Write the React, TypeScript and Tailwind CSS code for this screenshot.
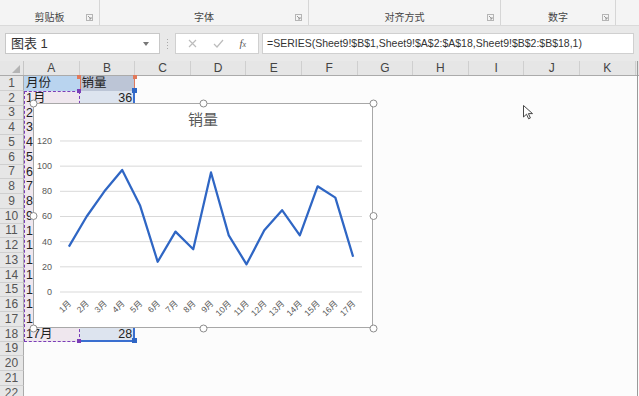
import React from "react";

const cols = ["A", "B", "C", "D", "E", "F", "G", "H", "I", "J", "K"];
const sales = [36, 60, 80, 97, 69, 24, 48, 34, 95, 45, 22, 49, 65, 45, 84, 75, 28];

const font = "font-['Liberation_Sans','Noto_Sans_CJK_SC',sans-serif]";

function Launcher() {
  return (
    <svg width="7" height="7" viewBox="0 0 7 7" className="absolute right-[6px] bottom-[4px]">
      <rect x="0.5" y="0.5" width="6" height="6" fill="none" stroke="#b5b5b5" />
      <path d="M2 2 L5 5 M5 3 V5 H3" stroke="#9a9a9a" fill="none" />
    </svg>
  );
}

function Ribbon() {
  const groups = [
    { label: "剪贴板", w: "w-[100px]" },
    { label: "字体", w: "w-[209px]" },
    { label: "对齐方式", w: "w-[192px]" },
    { label: "数字", w: "w-[115px]" },
  ];
  return (
    <div className="flex h-[26px] bg-[#f4f4f4] border-b border-[#dadada]">
      {groups.map((g) => (
        <div
          key={g.label}
          className={`${g.w} relative border-r border-[#d6d6d6] text-[10px] text-[#444]`}
        >
          <span className="absolute left-0 right-0 top-[12px] text-center leading-[12px]">{g.label}</span>
          <Launcher />
        </div>
      ))}
      <div className="flex-1" />
    </div>
  );
}

function FormulaBar() {
  return (
    <div className="flex items-center h-[35px] bg-[#e9e9e9] pl-[5px] pr-[5px]">
      <div className="w-[155px] h-[21px] bg-white border border-[#c8c8c8] flex items-center justify-between pl-[5px] pr-[10px]">
        <span className="text-[13px] text-[#333]">图表 1</span>
        <svg width="6" height="4" viewBox="0 0 6 4">
          <path d="M0 0 H6 L3 4 Z" fill="#777" />
        </svg>
      </div>
      <div className="w-[15px] flex flex-col items-center gap-[2px]">
        <span className="w-[1px] h-[1px] bg-[#aaa]" />
        <span className="w-[1px] h-[1px] bg-[#aaa]" />
        <span className="w-[1px] h-[1px] bg-[#aaa]" />
        <span className="w-[1px] h-[1px] bg-[#aaa]" />
      </div>
      <div className="w-[84px] h-[21px] bg-white border border-[#d0d0d0] flex items-center justify-around px-[4px]">
        <svg width="9" height="9" viewBox="0 0 9 9">
          <path d="M1 1 L8 8 M8 1 L1 8" stroke="#bcbcbc" strokeWidth="1.2" />
        </svg>
        <svg width="11" height="9" viewBox="0 0 11 9">
          <path d="M1 5 L4 8 L10 1" stroke="#bcbcbc" strokeWidth="1.2" fill="none" />
        </svg>
        <span className="text-[11px] italic font-['Liberation_Serif',serif] text-[#555]">
          f<span className="text-[8px]">x</span>
        </span>
      </div>
      <div className="flex-1 h-[21px] ml-[3px] bg-white border border-[#d0d0d0] flex items-center pl-[4px] text-[10.5px] text-[#333]">
        =SERIES(Sheet9!$B$1,Sheet9!$A$2:$A$18,Sheet9!$B$2:$B$18,1)
      </div>
    </div>
  );
}

function Chart() {
  const W = 340;
  const H = 225;
  const x0 = 27;
  const x1 = 329;
  const y0 = 189;
  const step = 25.17;
  const cw = (x1 - x0) / 17;
  const pts = sales.map((v, i) => [x0 + cw * (i + 0.5), y0 - (v / 20) * step]);
  const handles = [
    [0, 0], [W / 2, 0], [W, 0],
    [0, H / 2], [W, H / 2],
    [0, H], [W / 2, H], [W, H],
  ];
  return (
    <div className="absolute left-[33px] top-[103px] w-[340px] h-[225px] bg-white border border-[#a8a8a8]">
      <svg width={W} height={H} className="absolute left-[-1px] top-[-1px] overflow-visible">
        <text x={W / 2} y={22} textAnchor="middle" fontSize="15" fill="#595959" fontFamily="Noto Sans CJK SC, sans-serif">
          销量
        </text>
        {[0, 1, 2, 3, 4, 5, 6].map((k) => (
          <g key={k}>
            <line x1={x0} x2={x1} y1={y0 - k * step} y2={y0 - k * step} stroke="#d9d9d9" strokeWidth="1" />
            <text x={19} y={y0 - k * step + 3} textAnchor="end" fontSize="9" fill="#595959" fontFamily="Liberation Sans, sans-serif">
              {k * 20}
            </text>
          </g>
        ))}
        <polyline
          points={pts.map((p) => p.join(",")).join(" ")}
          fill="none"
          stroke="#2f66c4"
          strokeWidth="2.25"
          strokeLinejoin="round"
        />
        {sales.map((_, i) => {
          const cx = x0 + cw * (i + 0.5) + 3;
          return (
            <text
              key={i}
              x={cx}
              y={201}
              textAnchor="end"
              fontSize="8.5"
              fill="#595959"
              fontFamily="Liberation Sans, Noto Sans CJK SC, sans-serif"
              transform={`rotate(-45 ${cx} 201)`}
            >
              {i + 1}月
            </text>
          );
        })}
        {handles.map(([x, y], i) => (
          <circle key={i} cx={x + 0.5} cy={y + 0.5} r="3.5" fill="white" stroke="#8c8c8c" strokeWidth="1" />
        ))}
      </svg>
    </div>
  );
}

function Grid() {
  const rows = Array.from({ length: 22 }, (_, i) => i + 1);
  const cellA = (r: number) => (r === 1 ? "月份" : r <= 18 ? `${r - 1}月` : "");
  const cellB = (r: number) => (r === 1 ? "销量" : r <= 18 ? String(sales[r - 2]) : "");
  const bgA = (r: number) => (r === 1 ? "bg-[#b9d4ef]" : r <= 18 ? "bg-[#efe7ee]" : "");
  const bgB = (r: number) => (r === 1 ? "bg-[#bcc5d6]" : r <= 18 ? "bg-[#dde4ef]" : "");
  return (
    <div className="flex flex-col">
      <div className="flex h-[15px] bg-[#e6e6e6] border-b border-[#ababab]">
        <div className="w-[24px] relative border-r border-[#c6c6c6]">
          <svg width="8" height="8" viewBox="0 0 8 8" className="absolute right-[3px] bottom-[2px]">
            <path d="M8 0 V8 H0 Z" fill="#b4b4b4" />
          </svg>
        </div>
        {cols.map((c) => (
          <div key={c} className="w-[55.6px] shrink-0 flex items-center justify-center text-[12px] text-[#444] border-r border-[#cfcfcf]">
            {c}
          </div>
        ))}
      </div>
      {rows.map((r) => (
        <div key={r} className="flex h-[14.75px] text-[12.5px] text-[#222]">
          <div className="w-[24px] shrink-0 flex items-center justify-center bg-[#e6e6e6] text-[12px] text-[#555] border-r border-[#ababab] border-b border-b-[#cfcfcf]">
            {r}
          </div>
          <div className={`w-[55.6px] shrink-0 flex items-center pl-[2px] leading-none ${bgA(r)}`}>{cellA(r)}</div>
          <div
            className={`w-[55.6px] shrink-0 flex items-center leading-none ${r === 1 ? "pl-[2px]" : "justify-end pr-[3px]"} ${bgB(r)}`}
          >
            {cellB(r)}
          </div>
          <div className="flex-1" />
        </div>
      ))}
    </div>
  );
}

function Cursor() {
  return (
    <svg width="11" height="15" viewBox="0 0 11 15" className="absolute left-[523px] top-[105px]">
      <path d="M0.5 0.5 V12 L3.5 9.2 L5.6 13.8 L7.4 13 L5.4 8.6 L9.5 8.6 Z" fill="white" stroke="#333" strokeWidth="0.9" strokeLinejoin="round" />
    </svg>
  );
}

export default function App() {
  return (
    <div className={`relative w-[639px] h-[396px] overflow-hidden bg-[#fcfcfc] ${font}`}>
      <Ribbon />
      <FormulaBar />
      <Grid />
      {/* range highlights for the series */}
      <div className="absolute left-[24px] top-[90.75px] w-[55.6px] h-[251px] border border-dashed border-[#7a3db8]" />
      <div className="absolute left-[79.6px] top-[90.75px] w-[55.6px] h-[251px] border-r-2 border-b-2 border-[#3a6fd0]" />
      <div className="absolute left-[79.6px] top-[76px] w-[55.6px] h-[15px] border-l border-r border-[#e0795a]" />
      <div className="absolute left-[77px] top-[75px] w-[4px] h-[4px] bg-[#e0795a]" />
      <div className="absolute left-[133px] top-[75px] w-[4px] h-[4px] bg-[#e0795a]" />
      <div className="absolute left-[77px] top-[89px] w-[4px] h-[4px] bg-[#7a3db8]" />
      <div className="absolute left-[132px] top-[88px] w-[5px] h-[5px] bg-[#2f66c4]" />
      <div className="absolute left-[77px] top-[339px] w-[4px] h-[4px] bg-[#7a3db8]" />
      <div className="absolute left-[132px] top-[338px] w-[5px] h-[5px] bg-[#2f66c4]" />
      <Chart />
      <Cursor />
      <div className="absolute right-[1px] top-[61px] w-[1px] h-[335px] bg-[#9a9a9a]" />
    </div>
  );
}
